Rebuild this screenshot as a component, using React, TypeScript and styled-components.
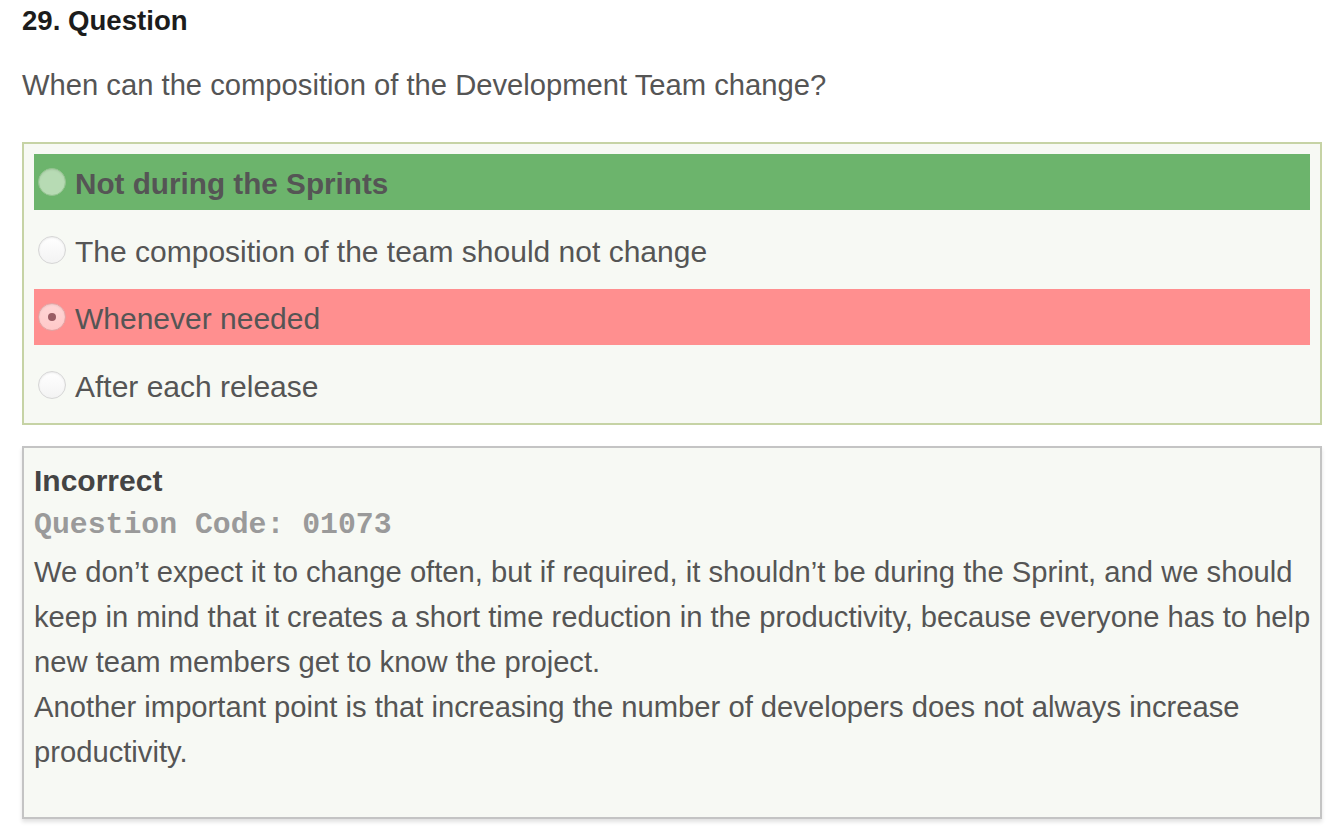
import React from "react";
import styled, { createGlobalStyle } from "styled-components";

const GlobalStyle = createGlobalStyle`
  html, body {
    margin: 0;
    padding: 0;
    background: #ffffff;
  }
  body {
    font-family: "Liberation Sans", Arial, Helvetica, sans-serif;
    color: #555555;
  }
`;

const Page = styled.div`
  width: 1300px;
  padding: 5px 0 20px 22px;
  display: flex;
  flex-direction: column;
`;

const Heading = styled.h3`
  margin: 0;
  font-size: 27.6px;
  line-height: 32px;
  font-weight: 700;
  color: #1c1c1c;
`;

const QuestionText = styled.p`
  margin: 32px 0 0;
  font-size: 29.2px;
  line-height: 33px;
  color: #555555;
`;

const OptionsBox = styled.div`
  margin-top: 40px;
  border: 2px solid #c6d3a5;
  background: #f7f9f4;
  padding: 10px;
  display: flex;
  flex-direction: column;
  gap: 11.5px;
`;

type Status = "correct" | "wrong" | "none";

const rowBg: Record<Status, string> = {
  correct: "#6cb46c",
  wrong: "#ff8f8f",
  none: "transparent",
};

const OptionRow = styled.div<{ $status: Status }>`
  height: 56px;
  display: flex;
  align-items: center;
  gap: 9px;
  padding-left: 4px;
  background: ${(p) => rowBg[p.$status]};
`;

const Radio = styled.span<{ $status: Status; $checked?: boolean }>`
  position: relative;
  flex: none;
  width: 28px;
  height: 28px;
  border-radius: 50%;
  box-sizing: border-box;
  border: 1px solid
    ${(p) =>
      p.$status === "correct"
        ? "#93c38f"
        : p.$status === "wrong"
        ? "#e3a3a3"
        : "#d6d6d6"};
  background: ${(p) =>
    p.$status === "correct"
      ? "#b7dbb4"
      : p.$status === "wrong"
      ? "linear-gradient(#ffd6d6, #ffc9c9)"
      : "linear-gradient(#ffffff, #f3f3f3)"};
  box-shadow: inset 0 1px 2px rgba(0, 0, 0, 0.08);

  &::after {
    content: "";
    display: ${(p) => (p.$checked ? "block" : "none")};
    position: absolute;
    left: 50%;
    top: 50%;
    width: 8px;
    height: 8px;
    margin: -4px 0 0 -4px;
    border-radius: 50%;
    background: #9a5c64;
  }
`;

const OptionLabel = styled.span<{ $bold?: boolean }>`
  padding-top: 4px;
  font-size: ${(p) => (p.$bold ? "29.7px" : "30px")};
  font-weight: ${(p) => (p.$bold ? 700 : 400)};
  color: #555555;
  white-space: nowrap;
`;

const Feedback = styled.div`
  margin-top: 21.7px;
  border: 2px solid #c4c4c4;
  background: #f7f9f4;
  padding: 15px 0 41.5px 10px;
  box-shadow: 0 3px 4px rgba(0, 0, 0, 0.12);
  display: flex;
  flex-direction: column;
`;

const FeedbackTitle = styled.div`
  font-size: 30px;
  line-height: 36px;
  font-weight: 700;
  color: #444444;
`;

const QuestionCode = styled.div`
  padding-top: 3px;
  font-family: "Liberation Mono", "Courier New", monospace;
  font-size: 29.8px;
  line-height: 46px;
  font-weight: 700;
  color: #9a9a9a;
`;

const Explanation = styled.div`
  margin-top: 2px;
  font-size: 29.2px;
  line-height: 45px;
  color: #555555;
`;

const ExplanationLine = styled.span`
  display: block;
`;

const options: { label: string; status: Status; checked?: boolean }[] = [
  { label: "Not during the Sprints", status: "correct" },
  { label: "The composition of the team should not change", status: "none" },
  { label: "Whenever needed", status: "wrong", checked: true },
  { label: "After each release", status: "none" },
];

export default function App() {
  return (
    <>
      <GlobalStyle />
      <Page>
        <Heading>29. Question</Heading>
        <QuestionText>
          When can the composition of the Development Team change?
        </QuestionText>
        <OptionsBox>
          {options.map((o) => (
            <OptionRow key={o.label} $status={o.status}>
              <Radio $status={o.status} $checked={o.checked} />
              <OptionLabel $bold={o.status === "correct"}>{o.label}</OptionLabel>
            </OptionRow>
          ))}
        </OptionsBox>
        <Feedback>
          <FeedbackTitle>Incorrect</FeedbackTitle>
          <QuestionCode>Question Code: 01073</QuestionCode>
          <Explanation>
            <ExplanationLine>
              We don’t expect it to change often, but if required, it shouldn’t
              be during the Sprint, and we should keep in mind that it creates a
              short time reduction in the productivity, because everyone has to
              help new team members get to know the project.
            </ExplanationLine>
            <ExplanationLine>
              Another important point is that increasing the number of
              developers does not always increase productivity.
            </ExplanationLine>
          </Explanation>
        </Feedback>
      </Page>
    </>
  );
}
